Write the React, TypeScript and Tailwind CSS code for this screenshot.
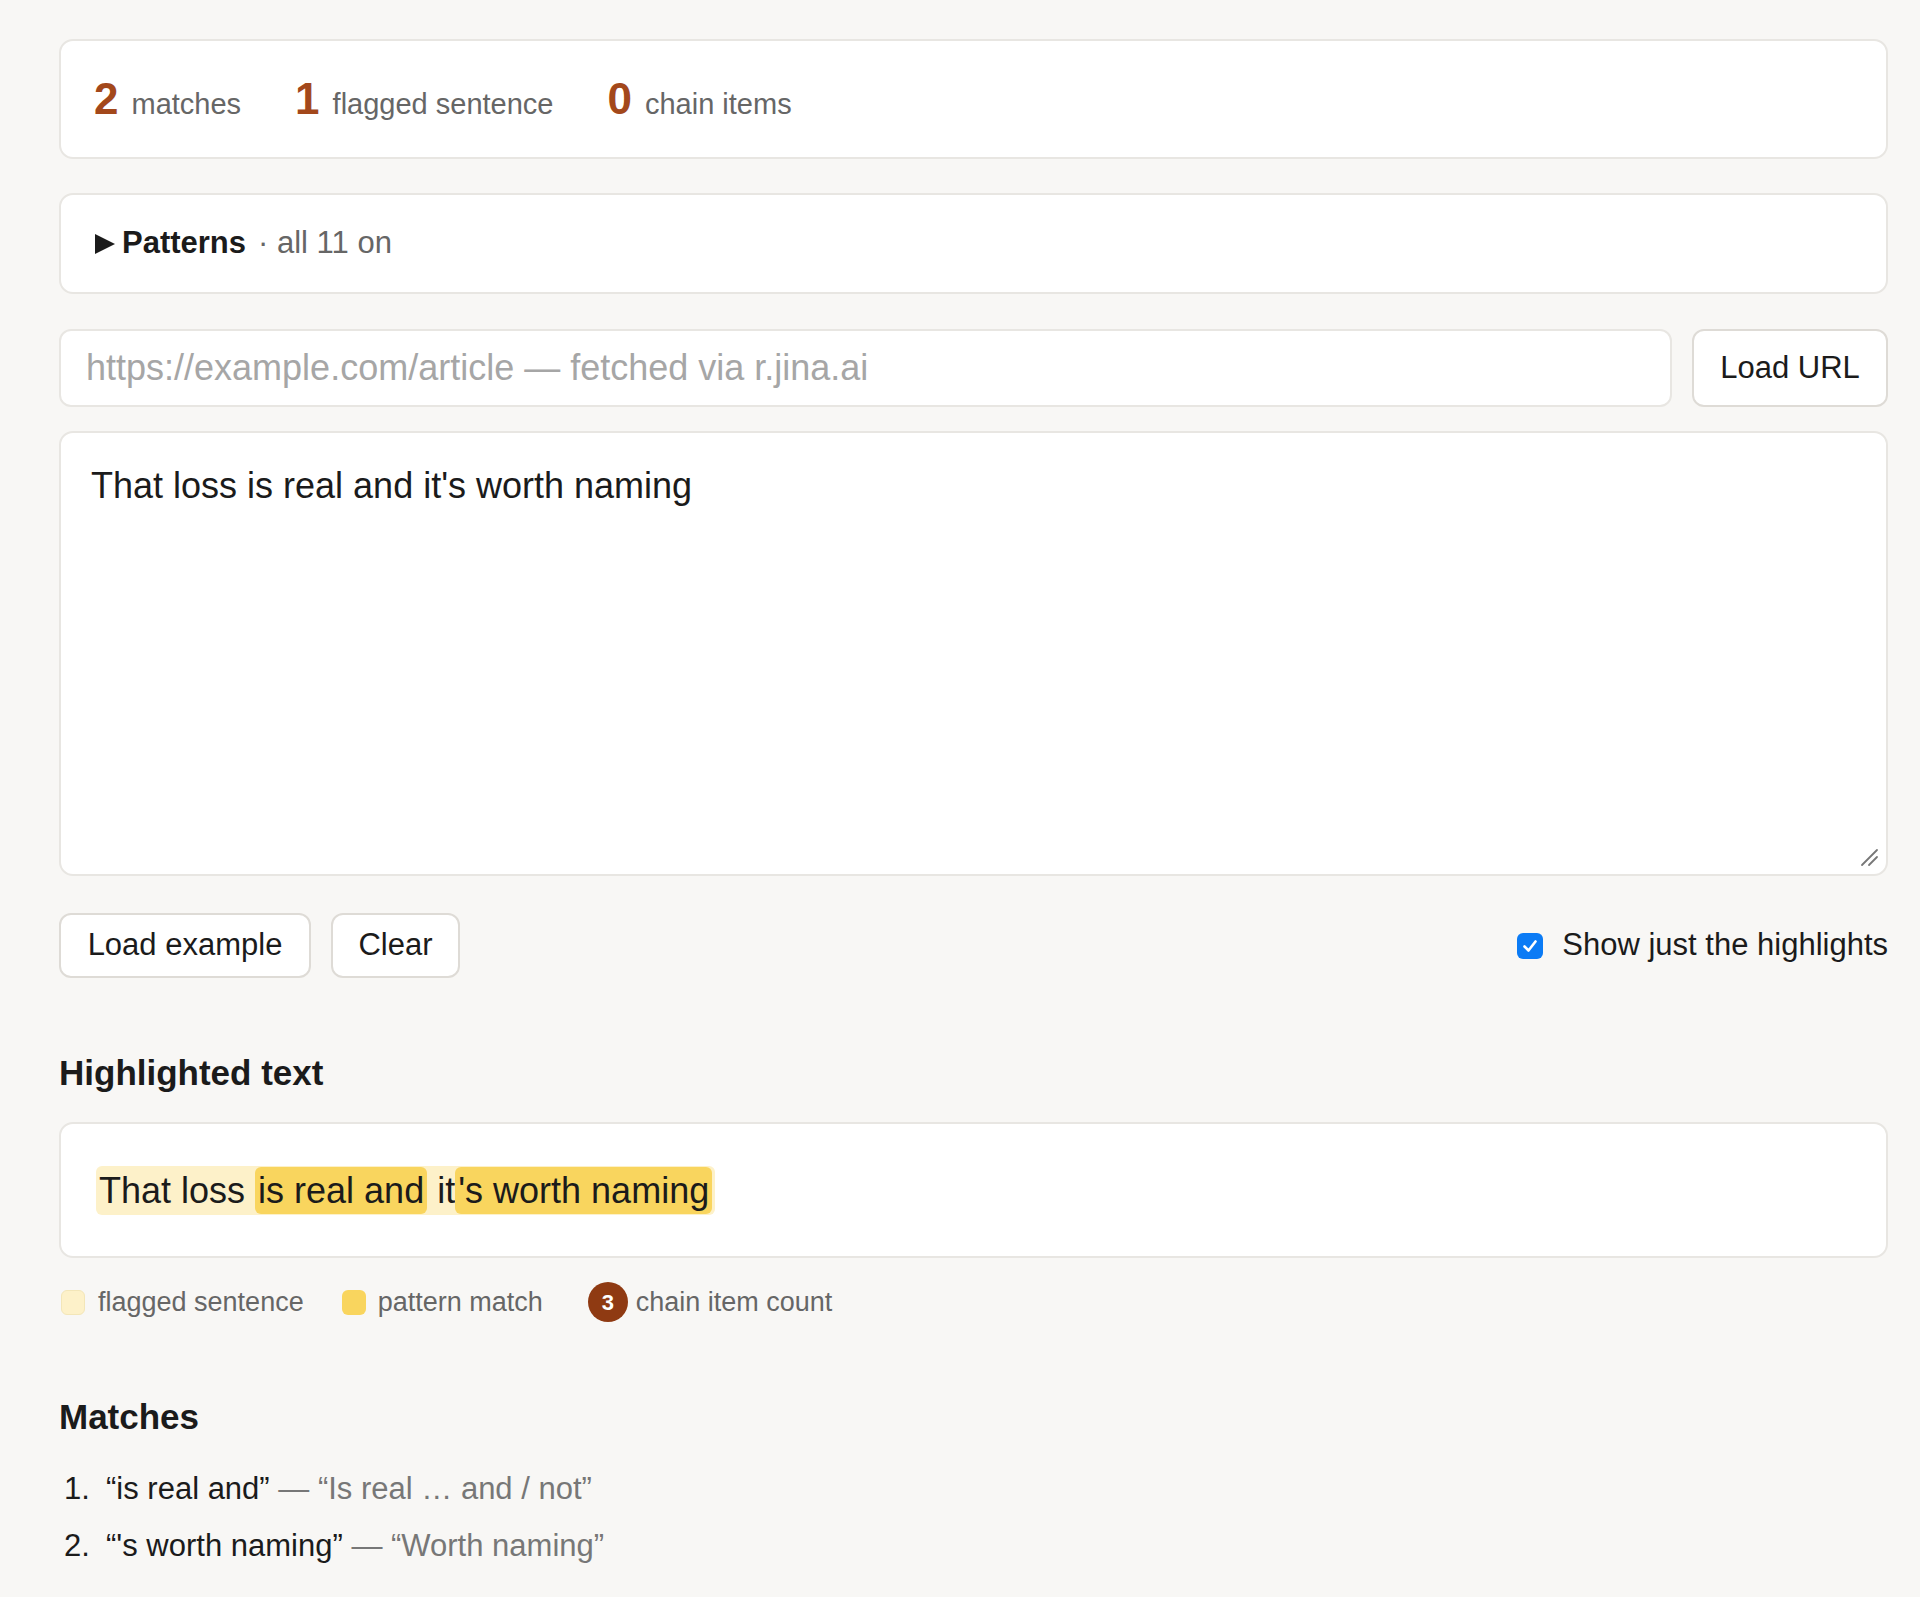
import { useState } from "react"

const stats = [
  { n: 2, label: "matches" },
  { n: 1, label: "flagged sentence" },
  { n: 0, label: "chain items" },
]

const matches = [
  { text: "is real and", pattern: "Is real … and / not" },
  { text: "'s worth naming", pattern: "Worth naming" },
]

export default function App() {
  const [text, setText] = useState("That loss is real and it's worth naming")
  const [url, setUrl] = useState("")
  const [onlyHighlights, setOnlyHighlights] = useState(true)

  return (
    <div className="min-h-[1597px] bg-[#f8f7f5] pl-[59px] pr-[32px] pt-[39px] pb-[40px] font-['Liberation_Sans',Arial,sans-serif] text-[#1b1b1b]">
      {/* stats */}
      <div className="h-[120px] rounded-[14px] border-2 border-[#e8e6e2] bg-white px-[33px] flex items-center gap-[54px]">
        {stats.map((s) => (
          <div key={s.label} className="flex items-baseline gap-[13px]">
            <span className="text-[44px] font-bold leading-none text-[#a3481b]">{s.n}</span>
            <span className="text-[29px] leading-none text-[#666]">{s.label}</span>
          </div>
        ))}
      </div>

      {/* patterns */}
      <div className="mt-[34px] h-[101px] rounded-[14px] border-2 border-[#e8e6e2] bg-white px-[33px] flex items-center">
        <svg width="22" height="22" viewBox="0 0 22 22" className="mr-[6px]">
          <path d="M1 1 L21 11 L1 21 Z" fill="#1b1b1b" />
        </svg>
        <span className="text-[31px] font-bold">Patterns</span>
        <span className="ml-[12px] text-[31px] text-[#666]">· all 11 on</span>
      </div>

      {/* url */}
      <div className="mt-[35px] flex gap-[20px] h-[78px]">
        <input
          value={url}
          onChange={(e) => setUrl(e.target.value)}
          placeholder="https://example.com/article — fetched via r.jina.ai"
          className="flex-1 rounded-[12px] border-2 border-[#e8e6e2] bg-white px-[25px] text-[36px] outline-none placeholder:text-[#a6a6a6]"
        />
        <button className="w-[196px] rounded-[12px] border-2 border-[#dedbd6] bg-white text-[31px] text-[#1b1b1b]">
          Load URL
        </button>
      </div>

      {/* textarea */}
      <div className="relative mt-[24px]">
        <textarea
          value={text}
          onChange={(e) => setText(e.target.value)}
          className="block h-[445px] w-full resize-none rounded-[14px] border-2 border-[#e8e6e2] bg-white px-[30px] py-[28px] text-[36px] leading-[1.4] outline-none"
        />
        <svg width="20" height="20" viewBox="0 0 20 20" className="pointer-events-none absolute bottom-[9px] right-[9px]">
          <path d="M3 18 L18 3 M10 18 L18 10" stroke="#777" strokeWidth="1.8" strokeLinecap="round" />
        </svg>
      </div>

      {/* actions */}
      <div className="mt-[37px] flex items-center justify-between">
        <div className="flex gap-[20px]">
          <button className="h-[65px] w-[252px] rounded-[12px] border-2 border-[#dedbd6] bg-white text-[31px]">Load example</button>
          <button className="h-[65px] w-[129px] rounded-[12px] border-2 border-[#dedbd6] bg-white text-[31px]" onClick={() => setText("")}>Clear</button>
        </div>
        <label className="flex items-center gap-[19px] text-[31px] cursor-pointer" onClick={() => setOnlyHighlights(!onlyHighlights)}>
          <span className={`flex h-[26px] w-[26px] items-center justify-center rounded-[6px] ${onlyHighlights ? "bg-[#0b7bf5]" : "border-2 border-[#bbb] bg-white"}`}>
            {onlyHighlights && (
              <svg width="18" height="18" viewBox="0 0 18 18">
                <path d="M3.5 9.5 L7.5 13.5 L14.5 4.5" stroke="white" strokeWidth="2.6" fill="none" strokeLinecap="round" strokeLinejoin="round" />
              </svg>
            )}
          </span>
          Show just the highlights
        </label>
      </div>

      {/* highlighted */}
      <h2 className="mt-[74px] text-[35px] font-bold leading-[42px]">Highlighted text</h2>
      <div className="mt-[28px] h-[136px] rounded-[14px] border-2 border-[#e8e6e2] bg-white px-[35px] flex items-center">
        <span className="rounded-[6px] bg-[#fdf1c9] py-[5px] px-[3px] text-[36px] leading-[39px]">
          That loss <span className="rounded-[6px] bg-[#f9d55e] px-[3px] py-[3px]">is real and</span> it<span className="rounded-[6px] bg-[#f9d55e] px-[3px] py-[3px]">'s worth naming</span>
        </span>
      </div>

      {/* legend */}
      <div className="mt-[24px] flex items-center h-[40px] text-[27px] text-[#666]">
        <span className="ml-[2px] h-[25px] w-[24px] rounded-[6px] bg-[#fdf1c9] border border-[#f3e6b8]" />
        <span className="ml-[13px]">flagged sentence</span>
        <span className="ml-[38px] h-[25px] w-[24px] rounded-[6px] bg-[#f9d55e]" />
        <span className="ml-[12px]">pattern match</span>
        <span className="ml-[45px] flex h-[40px] w-[40px] items-center justify-center rounded-full bg-[#8f3a12] text-[22px] font-bold text-white">3</span>
        <span className="ml-[8px]">chain item count</span>
      </div>

      {/* matches */}
      <h2 className="mt-[74px] text-[35px] font-bold leading-[42px]">Matches</h2>
      <ol className="mt-[22px] text-[31px] leading-[57px]">
        {matches.map((m, i) => (
          <li key={i} className="flex">
            <span className="w-[47px] pl-[5px]">{i + 1}.</span>
            <span>“{m.text}”</span>
            <span className="text-[#777]">&nbsp;— “{m.pattern}”</span>
          </li>
        ))}
      </ol>
    </div>
  )
}
